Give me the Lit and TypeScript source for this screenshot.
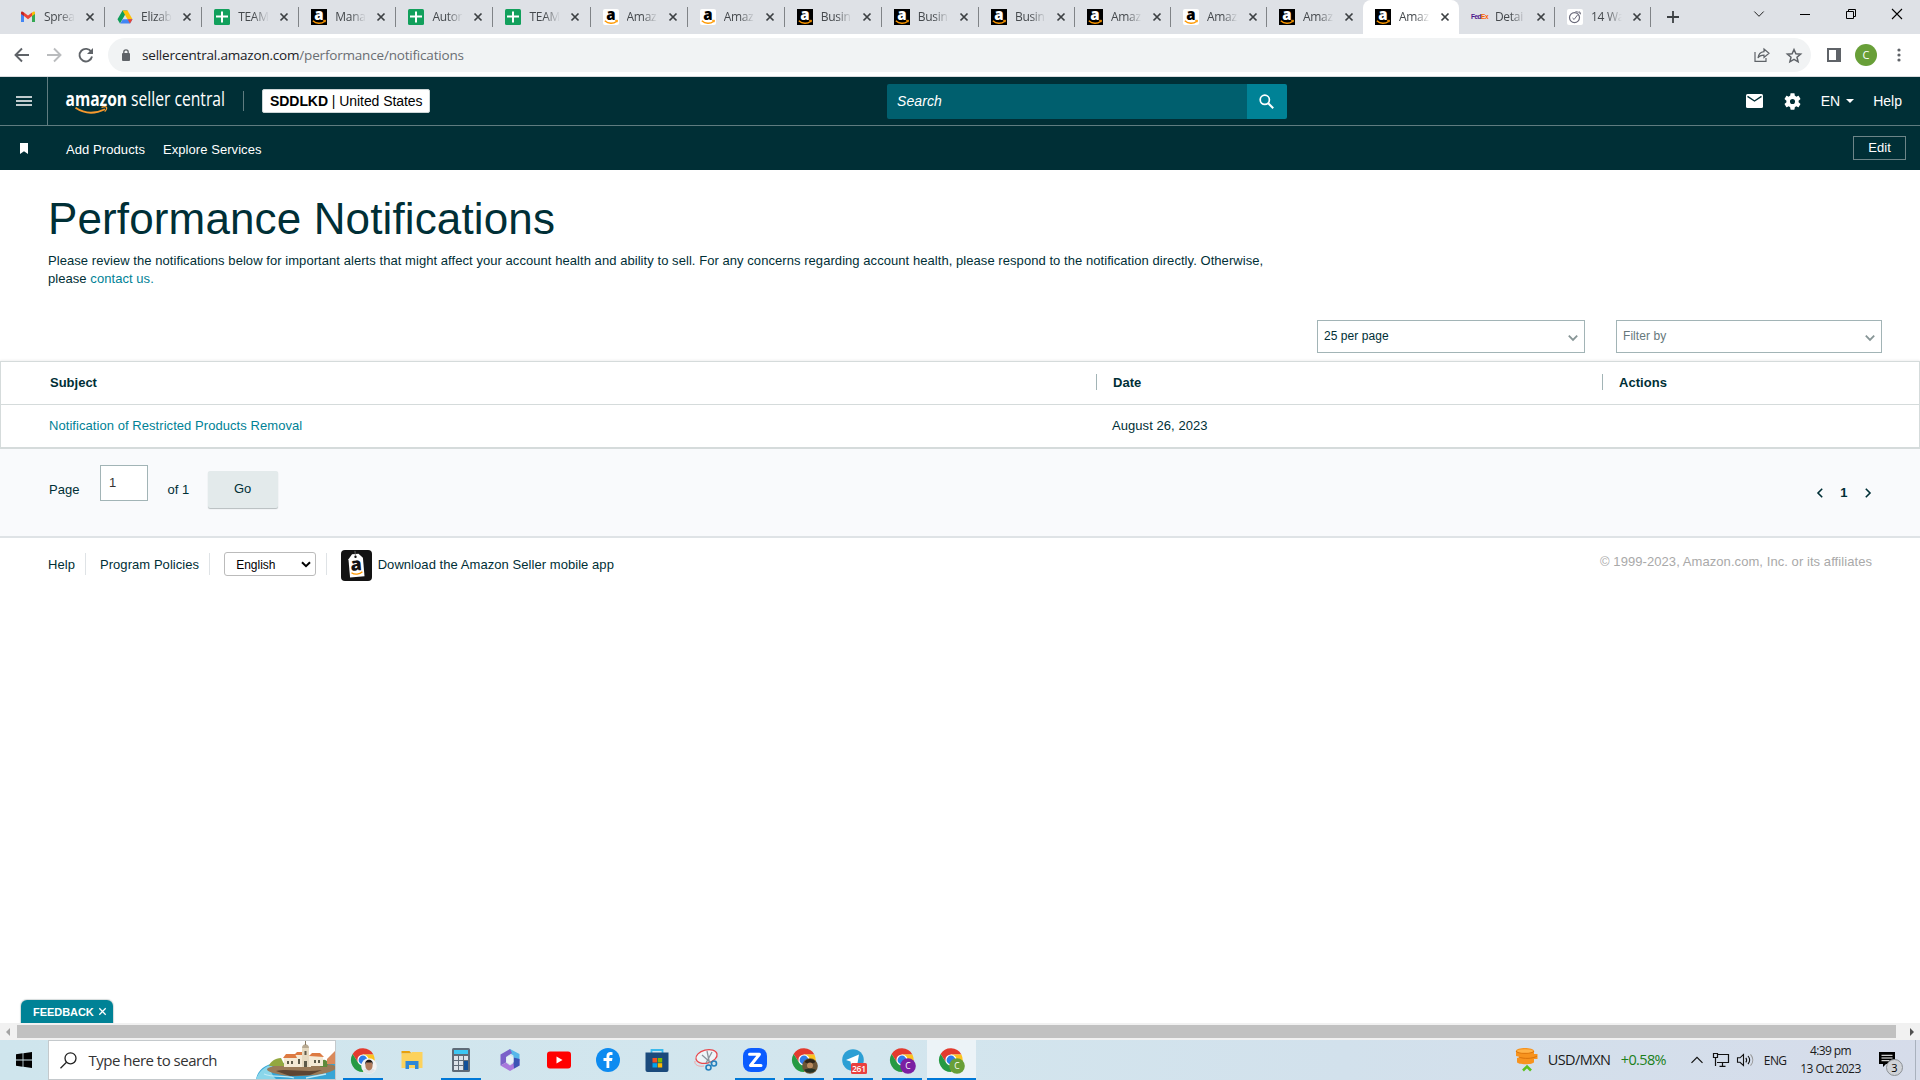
import { LitElement, html, svg, css } from "lit";
import { customElement } from "lit/decorators.js";
import { classMap } from "lit/directives/class-map.js";

type Fav = "gmail" | "drive" | "sheet" | "amzDark" | "amzLight" | "fedex" | "clock";
interface Tab { icon: Fav; title: string; active?: boolean; }

const TABS: Tab[] = [
  { icon: "gmail", title: "Sprea" },
  { icon: "drive", title: "Elizab" },
  { icon: "sheet", title: "TEAM" },
  { icon: "amzDark", title: "Mana" },
  { icon: "sheet", title: "Autor" },
  { icon: "sheet", title: "TEAM" },
  { icon: "amzLight", title: "Amaz" },
  { icon: "amzLight", title: "Amaz" },
  { icon: "amzDark", title: "Busin" },
  { icon: "amzDark", title: "Busin" },
  { icon: "amzDark", title: "Busin" },
  { icon: "amzDark", title: "Amaz" },
  { icon: "amzLight", title: "Amaz" },
  { icon: "amzDark", title: "Amaz" },
  { icon: "amzDark", title: "Amaz", active: true },
  { icon: "fedex", title: "Detai" },
  { icon: "clock", title: "14 Wa" },
];

const favicon = (k: Fav) => {
  switch (k) {
    case "gmail":
      return svg`<path d="M1 4v9h3V6z" fill="#4285f4"/><path d="M15 4v9h-3V6z" fill="#34a853"/><path d="M12 7V3.6l1.3-.8c.9-.5 1.7 0 1.7 1.1V5z" fill="#fbbc04"/><path d="M4 7V3.4l4 3 4-3V7l-4 3.2z" fill="#ea4335"/><path d="M1 5V3.9c0-1.100.8-1.600 1.700-1.100L4 3.600V7z" fill="#c5221f"/>`;
    case "drive":
      return svg`<path d="M5.500 1.500h5l-7.500 13L.500 10.300z" fill="#0f9d58"/><path d="M5.500 1.500h5l5 8.800h-5z" fill="#ffc107"/><path d="M3.200 14.500 5.800 10.200h9.700L13 14.500z" fill="#4285f4"/><path d="M10.600 10.200h4.900L13 14.500z" fill="#ea4335"/>`;
    case "sheet":
      return svg`<rect width="16" height="16" rx="1.500" fill="#12a05c"/><path d="M7 2.500h2v4h5v2H9v5H7v-5H2v-2h5z" fill="#fff"/>`;
    case "amzDark":
    case "amzLight": {
      const dark = k === "amzDark";
      return svg`<rect width="16" height="16" rx=${dark ? 0 : 2} fill=${dark ? "#000" : "#fff"}/><text x="8" y="10.600" text-anchor="middle" font-family="Open Sans, sans-serif" font-weight="800" font-size="15" fill=${dark ? "#fff" : "#000"}>a</text><path d="M1.800 11.800c3.500 3.200 8.500 3.200 12 .4" fill="none" stroke="#f90" stroke-width="1.400"/><path d="M12.200 11.400l2.300-.1-.5 2" fill="none" stroke="#f90" stroke-width="1"/>`;
    }
    case "fedex":
      return svg`<text x="0" y="10.300" font-family="Liberation Sans, sans-serif" font-weight="700" font-size="6.500" letter-spacing="-.5" fill="#4d148c">Fed<tspan fill="#ff6200">Ex</tspan></text>`;
    case "clock":
      return svg`<rect width="16" height="16" rx="2" fill="#fff"/><circle cx="7.500" cy="8.600" r="5" fill="none" stroke="#6b6b7b" stroke-width="1.200"/><path d="M5.500 9l1.600 1.500L10.500 6M8.500 2.600l3 .6 2.500 2M12.500 2.500l1 2" fill="none" stroke="#6b6b7b" stroke-width="1"/>`;
  }
};

const chromeMark = svg`<path d="M1.600 6A12 12 0 0 1 22.400 6.500H12L7.200 14.750z" fill="#e33b2e"/><path d="M1.600 6A12 12 0 0 0 12 24L16.800 14.750H7.200z" fill="#269a43"/><path d="M22.400 6.500A12 12 0 0 1 12 24l4.800-9.200L12 6.500z" fill="#fcc31e"/><circle cx="12" cy="12" r="5.600" fill="#fff"/><circle cx="12" cy="12" r="4.400" fill="#2f7de9"/>`;

interface App { name: string; open?: boolean; active?: boolean; art: unknown; }
const badge = (fill: string) => svg`<circle cx="18" cy="18" r="7.800" fill=${fill}/><text x="18" y="21.200" text-anchor="middle" font-family="Open Sans, sans-serif" font-size="8.500" fill="#fff">C</text>`;

const APPS: App[] = [
  { name: "chrome-a", open: true, art: svg`${chromeMark}<circle cx="18" cy="18" r="7.800" fill="#f3f3f3"/><path d="M12 22.500c2-3 10-3 12 0a7.800 7.800 0 0 1-12 0z" fill="#dfe3e6"/><ellipse cx="18" cy="17.500" rx="3.600" ry="5" fill="#b07a5a"/><path d="M14 17c-.5-7 8.500-7 8 0l-1-2.500h-6z" fill="#1d1a1a"/>` },
  { name: "files", art: svg`<path d="M1.500 3h8l2 2.500h-10z" fill="#e8a10c"/><path d="M1.500 5.500h9l1.500-1.500h10.500v16h-21z" fill="#fdd25c"/><path d="M5.500 13h13v8h-3.500v-4H9v4H5.500z" fill="#2f87d8"/>` },
  { name: "calc", open: true, art: svg`<rect x="3" y="0" width="18" height="24" rx="1.500" fill="#5f6b78"/><rect x="5" y="2" width="14" height="4" fill="#3cc7f4"/><path d="M5 8h4v4H5zm5 0h4v4h-4zm5 0h4v4h-4zM5 13h4v4H5zm5 0h4v4h-4zM5 18h4v4H5zm5 0h4v4h-4z" fill="#dce3ea"/><path d="M15 13h4v9h-4z" fill="#11509a"/>` },
  { name: "office", art: svg`<path d="M12 1 21.500 6v7l-6-3.500V7.500L10 4z" fill="#56b7ea"/><path d="M12 1 2.500 6.500v11l5.500-3V9l6-4z" fill="#7b61c9"/><path d="M2.500 17.500 12 23l9.500-5.500v-6.500L12 17.500 8 14.500z" fill="#a978dc"/><path d="M21.500 11v6.500L16 20.500l-.5-6.500V9.500z" fill="#3b55b5"/><path d="M8.500 9.500 12 7.500l3.500 2v4.500L12 16l-3.500-2z" fill="#e8f1f6"/>` },
  { name: "youtube", art: svg`<rect x="0" y="3.500" width="24" height="17" rx="3" fill="#f00"/><path d="M9.500 8.500v7l6-3.500z" fill="#fff"/>` },
  { name: "facebook", art: svg`<circle cx="12" cy="12" r="12" fill="#0d8bf0"/><path d="M10.500 20v-7H7.500v-3h3V8c0-2.800 1.700-4 4-4l2 .2V7h-1.500c-1.300 0-1.700.6-1.700 1.500V10h3.200l-.5 3h-2.700v7z" fill="#fff"/>` },
  { name: "store", art: svg`<path d="M6.500 5V2h11v3" fill="none" stroke="#39b9ec" stroke-width="1.800"/><path d="M.5 4.500h23V22a2 2 0 0 1-2 2h-19a2 2 0 0 1-2-2z" fill="#1b4a7c"/><path d="M7.500 10H12v4.500H7.500z" fill="#f25022"/><path d="M12.700 10h4.500v4.500h-4.500z" fill="#7fba00"/><path d="M7.500 15.200H12v4.300H7.500z" fill="#00a4ef"/><path d="M12.700 15.200h4.500v4.300h-4.500z" fill="#ffb900"/>` },
  { name: "snip", art: svg`<ellipse cx="12.500" cy="8.500" rx="10.800" ry="6.500" transform="rotate(-14 12.500 8.500)" fill="#fff" fill-opacity=".6" stroke="#e8474c" stroke-width="1.300"/><path d="M1 13c-1 4 4 6 9 5" fill="none" stroke="#f2a3a5"/><path d="M13 3l2.500 12M8 7l9 8M18 4l-6 11" stroke="#8b949c" stroke-width="1.300"/><circle cx="14.500" cy="19.500" r="2.500" fill="none" stroke="#2580bd" stroke-width="1.600"/><circle cx="20" cy="15.500" r="2.500" fill="none" stroke="#2580bd" stroke-width="1.600"/>` },
  { name: "zoom", open: true, art: svg`<rect width="24" height="24" rx="8" fill="#0b5cff"/><path d="M6.500 6.300h10L7.500 17.500H18" fill="none" stroke="#fff" stroke-width="3" stroke-linejoin="round" stroke-linecap="round"/>` },
  { name: "chrome-b", open: true, art: svg`${chromeMark}<circle cx="18" cy="18" r="7.800" fill="#6b5536"/><path d="M12.500 14c2-4 9-4 11 0l-3 1.500h-5z" fill="#2b2316"/><circle cx="18" cy="17.500" r="3" fill="#b98a5d"/><path d="M12 22c3-2 9-2 12 0a7.800 7.800 0 0 1-12 0z" fill="#243226"/>` },
  { name: "telegram", open: true, art: svg`<circle cx="12" cy="12" r="10.800" fill="#2c9fd4"/><path d="M5 12 18 6.500 16 18l-4-3-2 2-.5-3.500z" fill="#fff"/><rect x="10" y="15" width="16" height="11" rx="1.500" fill="#e9403f"/><text x="18" y="23.600" text-anchor="middle" font-family="Open Sans, sans-serif" font-size="8.500" font-weight="600" textLength="14" fill="#fff">261</text>` },
  { name: "chrome-c", open: true, art: svg`${chromeMark}${badge("#7b1fa2")}` },
  { name: "chrome-d", open: true, active: true, art: svg`${chromeMark}${badge("#689f38")}` },
];

@customElement("app-root")
export class AppRoot extends LitElement {
  static styles = css`
    :host { display: block; width: 1920px; height: 1080px; overflow: hidden; background: #fff;
      font-family: "Liberation Sans", Arial, sans-serif; color: #002f36; font-size: 13px; letter-spacing: .058px; }
    * { box-sizing: border-box; }
    svg { display: block; flex: none; overflow: visible; letter-spacing: 0; }
    .screen { display: flex; flex-direction: column; height: 1080px; }
    .row { display: flex; align-items: center; }
    .grow { flex: 1; }
    .t { white-space: nowrap; flex: none; }
    .seg { font-family: "Open Sans", "Noto Sans", sans-serif; }

    .tabs { height: 34px; background: #dee1e6; padding-left: 8px; flex: none; }
    .tab { width: 97.100px; height: 34px; padding-left: 12px; flex: none; color: #45494d; }
    .tab.narrow { width: 96px; }
    .tab.active { background: #fff; border-radius: 8px 8px 0 0; }
    .title { width: 31px; height: 18px; margin-left: 8px; overflow: hidden; white-space: nowrap; font-size: 12px; line-height: 17px; letter-spacing: -.3px;
      -webkit-mask-image: linear-gradient(90deg, #000 50%, transparent 100%); mask-image: linear-gradient(90deg, #000 50%, transparent 100%); }
    .close { margin-left: 11px; }
    .sep { width: 1px; height: 20px; background: #808387; margin-left: auto; }
    .sep.off { visibility: hidden; }
    .plus { margin-left: 16px; }
    .wins { gap: 36px; margin-right: 18px; margin-top: -6px; }

    .toolbar { height: 43px; flex: none; border-bottom: 1px solid #d9dbde; padding-left: 14px; }
    .omni { width: 1703px; height: 34px; margin-left: 14px; background: #f1f3f4; border-radius: 17px; padding: 0 9px 0 14px; }
    .url { margin-left: 12px; font-size: 13.500px; color: #202124; letter-spacing: -.190px; }
    .url .path { color: #6a6e73; }
    .omni .star { margin-left: 16px; }
    .panel { margin-left: 16px; }
    .avatar { width: 22px; height: 22px; border-radius: 50%; background: #689f38; color: #fff; font-size: 11px; text-align: center; line-height: 21px; margin-left: 14px; }
    .dots { margin-left: 20px; }

    .head { height: 49px; flex: none; background: #002f36; border-bottom: 1px solid #5f7c80; color: #fff; letter-spacing: 0; }
    .burger { width: 48px; height: 48px; border-right: 1px solid #5f7c80; padding-left: 16px; }
    .logo { margin-left: 18px; }
    .bar { width: 1px; height: 20px; background: #5f7c80; margin-left: 17px; }
    .badge { width: 168px; height: 24px; margin-left: 18px; background: #fff; border-radius: 2px; color: #000; padding-left: 7px; font-size: 14px; border: 1px solid #ccd5d6; letter-spacing: -.060px; }
    .search { margin-left: 457px; width: 400px; height: 35px; border-radius: 2px; overflow: hidden; }
    .field { width: 360px; height: 35px; background: #005f6e; padding-left: 10px; font-style: italic; font-size: 14px; letter-spacing: .1px; }
    .go-search { width: 40px; height: 35px; background: #008296; justify-content: center; padding-right: 1px; }
    .gear { margin-left: 20.500px; }
    .lang { margin-left: 20px; font-size: 14px; }
    .caret { width: 0; height: 0; border: 4px solid transparent; border-top-color: #fff; border-bottom: 0; margin-left: 6px; }
    .help { margin-left: 19px; margin-right: 18px; font-size: 14px; }

    .sub { height: 44px; flex: none; background: #002f36; color: #fff; padding: 0 14px 0 20px; }
    .add { margin: 2px 0 0 38px; letter-spacing: .080px; }
    .explore { margin: 2px 0 0 18px; }
    .edit { width: 53px; height: 24px; border: 1px solid #6d8588; justify-content: center; margin-top: -1px; }

    .intro { height: 150px; flex: none; padding: 21px 48px 0; }
    h1 { margin: 0; font-weight: 400; font-size: 44px; line-height: 56px; white-space: nowrap; letter-spacing: .130px; }
    .lead { margin-top: 5px; line-height: 18px; }
    .link { color: #008296; }
    .filters { height: 41px; flex: none; padding-left: 1317px; align-items: flex-start; }
    .select { width: 268px; height: 33px; border: 1px solid #a2b4b6; padding: 0 6px 2px 6px; font-size: 12px; }
    .select.second { width: 266px; margin-left: 31px; color: #66787b; }
    .select .chev { margin-top: 4px; }

    .table { height: 88px; flex: none; border: 1px solid #d5dbdb; border-bottom: 2px solid #d5dbdb; box-shadow: 0 -1px 2px #00000010; }
    .tr { display: grid; grid-template-columns: 1095px 506px 1fr; align-items: center; height: 42px; padding-bottom: 2px; }
    .tr + .tr { border-top: 1px solid #d5dbdb; height: 43px; padding-bottom: 2px; }
    .th { font-weight: 700; height: 16px; padding-left: 16px; border-left: 1px solid #a2b4b6; line-height: 18px; white-space: nowrap; }
    .th.first { border: 0; padding-left: 49px; letter-spacing: 0; }
    .td { padding-left: 16px; white-space: nowrap; }
    .td.first { padding-left: 48px; }

    .pager { height: 89px; flex: none; background: #f9fafc; border-bottom: 2px solid #dfe3e6; padding: 0 48px 0 49px; align-items: flex-start; line-height: 16px; }
    .pager .lbl { margin-top: 33px; }
    .num { width: 48px; height: 36px; margin: 16px 0 0 20.400px; border: 1px solid #a2b4b6; background: #fff; padding: 9px 0 0 8px; color: #333; }
    .of { margin-left: 19.500px; letter-spacing: 0; }
    .go { width: 70px; height: 37px; margin: 22px 0 0 18.500px; background: #e3eaeb; border-radius: 2px; box-shadow: 0 1px 1px #b5bcbe; justify-content: center; padding-bottom: 2px; }
    .pg { margin-top: 36px; gap: 16.400px; }
    .pg b { line-height: 16px; }

    .foot { height: 52px; flex: none; padding: 2px 48px 0; }
    .foot .t { margin-top: -2px; }
    .fsep { width: 1px; height: 22px; background: #dfe3e6; margin: -2px 0 0 10px; }
    .fsep.wide { margin-right: 14px; }
    .eng { width: 92px; height: 24px; border: 1px solid #bbb; border-radius: 3px; margin: -2px 0 0 14px; padding: 0 4px 0 11px; color: #000; font-size: 12px; letter-spacing: 0; }
    .foot .eng .t { margin-top: 1px; }
    .app { margin: 1px 0 0 13.500px; }
    .foot .dl { margin-left: 6px; }
    .foot .copy { color: #a9a9a9; margin-top: -8px; letter-spacing: .068px; }

    .space { flex: 1; display: flex; align-items: flex-end; padding-left: 21px; }
    .feedback { width: 92px; height: 23px; background: #008296; color: #fff; border-radius: 6px 6px 0 0; font-size: 11px; font-weight: 700; padding-left: 12px; box-shadow: 0 0 1px 1px #d5dbdb; letter-spacing: -.050px; }
    .feedback svg { margin-left: 5.500px; }
    .scroll { height: 17px; flex: none; background: #f1f1f1; padding: 0 5px 0 5px; justify-content: space-between; }
    .thumb { width: 1879px; height: 13px; background: #c1c1c1; margin: 0 auto 0 6px; }

    .taskbar { height: 40px; flex: none; background: linear-gradient(90deg, #cfe5ed, #d3e6ee 45%, #d2e1ec 70%, #d6dcea); color: #1a1a1a; }
    .start { width: 48px; padding-left: 16px; }
    .find { width: 288px; height: 40px; background: #fff; border: 1px solid #c4c9cc; padding-left: 11px; overflow: hidden; }
    .find .t { margin-left: 11.500px; font-size: 15px; color: #333; letter-spacing: -.5px; }
    .town { margin-left: auto; }
    .apps { padding-left: 2.500px; }
    .appcell { width: 49px; height: 40px; display: flex; flex-direction: column; align-items: center; justify-content: space-between; padding-top: 8px; flex: none; }
    .appcell.active { background: #ecf3f7; }
    .appcell .line { width: 40px; height: 2px; }
    .appcell.open .line { background: #0078d7; }
    .appcell.active .line { width: 49px; }
    .fx { margin: -1px 0 0 10px; font-size: 14.500px; letter-spacing: -.6px; }
    .pct { margin: -1px 0 0 10.500px; font-size: 14.500px; color: #1a7f1a; letter-spacing: -.650px; }
    .up { margin-left: 25.500px; }
    .net { margin-left: 10px; }
    .vol { margin-left: 8px; }
    .kb { margin-left: 9.500px; font-size: 12px; letter-spacing: -.6px; }
    .clock { width: 70px; margin-left: 9px; text-align: center; font-size: 12px; line-height: 18px; letter-spacing: -.580px; }
    .note { margin: 0 18px 0 13.500px; }
    .peek { width: 1px; height: 40px; background: #a9b1bd; margin-right: 4px; }
  `;

  private tab(t: Tab, i: number) {
    const off = t.active || TABS[i + 1]?.active;
    return html`<div class=${classMap({ row: true, tab: true, narrow: i > 9, active: !!t.active })}>
      <svg width="16" height="16" viewBox="0 0 16 16">${favicon(t.icon)}</svg>
      <span class="title seg">${t.title}</span>
      <svg class="close" width="8" height="8" viewBox="0 0 8 8"><path d="M.5.5l7 7m0-7l-7 7" stroke="#3c4043" stroke-width="1.700"/></svg>
      <i class=${classMap({ sep: true, off: !!off })}></i>
    </div>`;
  }

  private chevron() {
    return html`<svg class="chev" width="10" height="6" viewBox="0 0 10 6"><path d="M.8.6 5 4.900 9.200.6" fill="none" stroke="#879596" stroke-width="1.800"/></svg>`;
  }

  render() {
    return html`<div class="screen">
      <div class="row tabs">
        ${TABS.map((t, i) => this.tab(t, i))}
        <svg class="plus" width="12" height="12" viewBox="0 0 12 12"><path d="M6 0v12M0 6h12" stroke="#3c4043" stroke-width="1.800"/></svg>
        <span class="grow"></span>
        <div class="row wins">
          <svg width="10" height="6" viewBox="0 0 10 6"><path d="M.3.5 5 5.300 9.700.5" fill="none" stroke="#222"/></svg>
          <svg width="10" height="2" viewBox="0 0 10 2"><path d="M0 1.500h10" stroke="#000"/></svg>
          <svg width="10" height="10" viewBox="0 0 10 10"><path d="M.5 2.500h7v7h-7zM2.500 2.500v-2h7v7h-2" fill="none" stroke="#000"/></svg>
          <svg width="10" height="10" viewBox="0 0 10 10"><path d="M0 0l10 10M10 0L0 10" stroke="#000" stroke-width="1.100"/></svg>
        </div>
      </div>

      <div class="row toolbar">
        <svg width="80" height="16" viewBox="0 0 80 16" fill="none" stroke-width="1.900"><path d="M15 8H2M8 1.500 1.500 8 8 14.500" stroke="#5f6368"/><path d="M33 8h13M40 1.500 46.500 8 40 14.500" stroke="#babcbe"/><path d="M77.300 5A6.300 6.300 0 1 0 78 9.500" stroke="#5f6368"/><path d="M79 1v6h-6z" fill="#5f6368"/></svg>
        <div class="row omni">
          <svg width="8" height="12" viewBox="0 0 8 12"><rect y="4" width="8" height="8" rx="1" fill="#5f6368"/><path d="M1.800 5V3a2.200 2.200 0 0 1 4.400 0v2" fill="none" stroke="#5f6368" stroke-width="1.300"/></svg>
          <span class="t url seg">sellercentral.amazon.com<span class="path">/performance/notifications</span></span>
          <span class="grow"></span>
          <svg width="16" height="14" viewBox="0 0 16 14" fill="none" stroke="#5f6368" stroke-width="1.200"><path d="M1 4v9.300h11V10"/><path d="M10 1l5 4.300-5 4.200V7.200c-3 0-4.800.8-6 2.800.4-3.500 2.500-6 6-6.400z"/></svg>
          <svg class="star" width="16" height="15" viewBox="0 0 16 15"><path d="M8 1.500l1.900 4.300 4.700.4-3.600 3 1.100 4.600L8 11.400l-4.100 2.400L5 9.200l-3.600-3 4.700-.4z" fill="none" stroke="#5f6368" stroke-width="1.500"/></svg>
        </div>
        <svg class="panel" width="14" height="14" viewBox="0 0 14 14"><path d="M1 1h12v12H1z" fill="none" stroke="#5f6368" stroke-width="2"/><path d="M9 1h4v12H9z" fill="#5f6368"/></svg>
        <div class="avatar seg">C</div>
        <svg class="dots" width="4" height="14" viewBox="0 0 4 14" fill="#5f6368"><circle cx="2" cy="2" r="1.600"/><circle cx="2" cy="7" r="1.600"/><circle cx="2" cy="12" r="1.600"/></svg>
      </div>

      <div class="row head">
        <div class="row burger"><svg width="16" height="10" viewBox="0 0 16 10"><path d="M0 1h16M0 5h16M0 9h16" stroke="#fff" stroke-width="1.700"/></svg></div>
        <svg class="logo" width="160" height="26" viewBox="0 0 160 26">
          <g font-family="Open Sans, Noto Sans, sans-serif" font-size="19.500" fill="#fff"><text x="-.5" y="18" font-weight="700" textLength="61.500" lengthAdjust="spacingAndGlyphs">amazon</text><text x="65" y="18" textLength="94" lengthAdjust="spacingAndGlyphs">seller central</text></g>
          <path d="M9.500 19.800c9 6 20 6 29.500 1.400" fill="none" stroke="#f79a2e" stroke-width="1.800"/><path d="M35.500 19.400c2-.8 4.500-.8 5 0s-.6 3-1.800 4.200" fill="none" stroke="#f79a2e" stroke-width="1.200"/>
        </svg>
        <i class="bar"></i>
        <div class="row badge"><span class="t"><b>SDDLKD</b> | United States</span></div>
        <div class="row search">
          <div class="row field"><span class="t">Search</span></div>
          <div class="row go-search"><svg width="15" height="15" viewBox="0 0 15 15" fill="none" stroke="#fff"><circle cx="5.800" cy="5.800" r="4.600" stroke-width="1.700"/><path d="M9.200 9.200l5 5" stroke-width="2"/></svg></div>
        </div>
        <span class="grow"></span>
        <svg width="17" height="14" viewBox="0 0 17 14"><rect width="17" height="14" rx="1.500" fill="#fff"/><path d="M1.500 2.300 8.500 7l7-4.700" fill="none" stroke="#002f36" stroke-width="1.400"/></svg>
        <svg class="gear" width="17" height="17" viewBox="2 2 20 20"><path fill="#fff" d="M19.140 12.940c.04-.3.06-.61.06-.94 0-.32-.02-.64-.07-.94l2.030-1.580c.18-.14.23-.41.120-.61l-1.920-3.320c-.12-.22-.37-.29-.59-.22l-2.390.96c-.5-.38-1.030-.7-1.620-.94L14.400 2.810c-.04-.24-.24-.41-.48-.41h-3.840c-.24 0-.43.17-.47.41L9.250 5.350c-.59.240-1.130.57-1.620.94L5.240 5.330c-.22-.08-.47 0-.59.22L2.740 8.870c-.12.210-.08.470.120.610l2.030 1.580c-.05.3-.09.630-.09.940s.02.640.07.940l-2.030 1.580c-.18.140-.23.410-.12.610l1.920 3.320c.12.220.37.290.59.220l2.390-.96c.5.380 1.030.7 1.620.94l.36 2.540c.05.240.24.410.48.410h3.840c.24 0 .44-.17.47-.41l.36-2.540c.59-.24 1.130-.56 1.620-.94l2.390.96c.22.080.47 0 .59-.22l1.920-3.320c.12-.22.070-.47-.12-.61zM12 15a3 3 0 1 1 0-6 3 3 0 0 1 0 6z"/></svg>
        <span class="t lang">EN</span><i class="caret"></i>
        <span class="t help">Help</span>
      </div>

      <div class="row sub">
        <svg width="8" height="11" viewBox="0 0 8 11"><path d="M0 0h8v11L4 8.300 0 11z" fill="#fff"/></svg>
        <span class="t add">Add Products</span>
        <span class="t explore">Explore Services</span>
        <span class="grow"></span>
        <div class="row edit"><span class="t">Edit</span></div>
      </div>

      <div class="intro">
        <h1>Performance Notifications</h1>
        <div class="lead"><span class="t">Please review the notifications below for important alerts that might affect your account health and ability to sell. For any concerns regarding account health, please respond to the notification directly. Otherwise,</span><br><span class="t">please <span class="link">contact us.</span></span></div>
      </div>

      <div class="row filters">
        <div class="row select"><span class="t">25 per page</span><span class="grow"></span>${this.chevron()}</div>
        <div class="row select second"><span class="t">Filter by</span><span class="grow"></span>${this.chevron()}</div>
      </div>

      <div class="table">
        <div class="tr"><div class="th first">Subject</div><div class="th">Date</div><div class="th">Actions</div></div>
        <div class="tr"><div class="td first link">Notification of Restricted Products Removal</div><div class="td">August 26, 2023</div><div class="td"></div></div>
      </div>

      <div class="row pager">
        <span class="t lbl">Page</span>
        <div class="num">1</div>
        <span class="t lbl of">of 1</span>
        <div class="row go"><span class="t">Go</span></div>
        <span class="grow"></span>
        <div class="row pg">
          <svg width="8" height="10" viewBox="0 0 8 10"><path d="M6.200.8 2 5l4.200 4.200" fill="none" stroke="#002f36" stroke-width="1.600"/></svg>
          <b>1</b>
          <svg width="8" height="10" viewBox="0 0 8 10"><path d="M1.800.8 6 5 1.800 9.200" fill="none" stroke="#002f36" stroke-width="1.600"/></svg>
        </div>
      </div>

      <div class="row foot">
        <span class="t">Help</span><i class="fsep wide"></i>
        <span class="t">Program Policies</span><i class="fsep"></i>
        <div class="row eng"><span class="t">English</span><span class="grow"></span><svg width="10" height="7" viewBox="0 0 10 7"><path d="M1 1.200l4 4 4-4" fill="none" stroke="#000" stroke-width="2"/></svg></div>
        <i class="fsep"></i>
        <svg class="app" width="31" height="31" viewBox="0 0 31 31"><rect width="31" height="31" rx="4" fill="#131313"/><g transform="rotate(-5 15 15)"><path d="M8 8.500 12 4h6.500l4 4.500V27H8z" fill="#fff"/><circle cx="15.200" cy="6.800" r="1.200" fill="#131313"/><path d="M15.200 6V.8" stroke="#777" stroke-width=".8"/><text x="15.200" y="20.500" text-anchor="middle" font-family="Open Sans, sans-serif" font-weight="800" font-size="18" fill="#131313">a</text><path d="M9.800 22.300c3 2.500 8 2.500 11 0" fill="none" stroke="#f90" stroke-width="1.300"/></g></svg>
        <span class="t dl">Download the Amazon Seller mobile app</span>
        <span class="grow"></span>
        <span class="t copy">© 1999-2023, Amazon.com, Inc. or its affiliates</span>
      </div>

      <div class="space">
        <div class="row feedback"><span class="t">FEEDBACK</span><svg width="7" height="7" viewBox="0 0 7 7"><path d="M.3.3l6.400 6.400m0-6.400L.3 6.700" stroke="#fff" stroke-width="1.300"/></svg></div>
      </div>

      <div class="row scroll">
        <svg width="6" height="8" viewBox="0 0 6 8"><path d="M5 0v8L1 4z" fill="#a3a3a3"/></svg>
        <i class="thumb"></i>
        <svg width="6" height="8" viewBox="0 0 6 8"><path d="M1 0v8l4-4z" fill="#505050"/></svg>
      </div>

      <div class="row taskbar">
        <div class="start"><svg width="16" height="16" viewBox="0 0 16 16"><path d="M0 2.300 6.600 1.300V7.600H0zM7.400 1.200 16 0v7.600H7.400zM0 8.400h6.600v6.300L0 13.700zM7.400 8.400H16V16l-8.600-1.200z" fill="#000"/></svg></div>
        <div class="row find">
          <svg width="17" height="17" viewBox="0 0 17 17" fill="none" stroke="#222" stroke-width="1.300"><circle cx="10.500" cy="6.300" r="5.500"/><path d="M6.500 10.300.5 16.300"/></svg>
          <span class="t seg">Type here to search</span>
          <svg class="town" width="79" height="38" viewBox="0 0 79 38">
            <path d="M0 38C2 29 9 23 20 22l59 1v15z" fill="#35a5d6"/><path d="M0 38c3-8 9-13 18-15-5 5-3 10 2 15z" fill="#8ad6ea"/>
            <path d="M12 27c6-3 20-4 34-4s28-1 33 2-8 8-20 9-24 2-33 0-18-4-14-7z" fill="#9a7a58"/><path d="M20 30c12-3 28 2 46-1l-12 5-20 1z" fill="#5d4431"/>
            <path d="M13 25c1-4 6-8 12-8l4 8z" fill="#93a83f"/><path d="M64 23c1-5 6-6 8-1l-1 4h-7z" fill="#5f8a3a"/>
            <path d="M28 17h12v9H28zM54 15h13v10H54zM39 14h16v12H39z" fill="#f4ead6"/><path d="M46 7h7v19h-7z" fill="#e6d9c0"/><path d="M46 7c0-5 7-5 7 0z" fill="#b9aa92"/><path d="M49.500 0v4" stroke="#8b7d68"/>
            <path d="M27 17l3-4h9l2 4zM53 15l3-3h8l4 4zM38 14l3-3h5v3z" fill="#dd7a42"/><path d="M71 18l8-8v13h-8z" fill="#d98a5c"/>
            <path d="M31 20h2v3h-2zM35 20h2v3h-2zM42 18h2v5h-2zM48.500 10h2v4h-2zM48 20h3v6h-3zM58 19h2v3h-2zM62 19h2v3h-2z" fill="#5d5a4a"/>
            <path d="M8 33c10 4 20 1 30 4M50 37l20-4" stroke="#bfe9f5" stroke-width="1.300" fill="none"/>
          </svg>
        </div>
        <div class="row apps">
          ${APPS.map((a) => html`<div class=${classMap({ appcell: true, open: !!a.open, active: !!a.active })}><svg width="24" height="24" viewBox="0 0 24 24">${a.art}</svg><i class="line"></i></div>`)}
        </div>
        <span class="grow"></span>
        <svg width="22" height="24" viewBox="0 0 22 24"><path d="M0 3c0-4 18-4 18 0v3h3.500v5H18v3c0 3-17 3-17 0v-4L4 9 0 8z" fill="#f7931e"/><path d="M0 3c0 3 18 3 18 0M3 9c4 2 14 2 18-1" fill="none" stroke="#d9730b"/><ellipse cx="9" cy="3" rx="8" ry="1.800" fill="#ffb347"/><path d="M7 22.500l4-4 4 4" fill="none" stroke="#5dc21e" stroke-width="2.600"/></svg>
        <span class="t fx seg">USD/MXN</span>
        <span class="t pct seg">+0.58%</span>
        <svg class="up" width="12" height="8" viewBox="0 0 12 8"><path d="M.5 6.800 6 1.300l5.500 5.500" fill="none" stroke="#111" stroke-width="1.200"/></svg>
        <svg class="net" width="16" height="14" viewBox="0 0 16 14" fill="none" stroke="#111" stroke-width="1.200"><path d="M5 1.500h10.500v8H4M.5.5h4v4h-4zM2.500 4.500V13M9.500 9.500V13M6.500 13.300h6"/></svg>
        <svg class="vol" width="17" height="14" viewBox="0 0 17 14" fill="none" stroke="#111" stroke-width="1.100"><path d="M.5 4.800h2.500L6.500 1.500v11L3 9.300H.5z"/><path d="M8.800 4.800c1 1.300 1 3.200 0 4.500M11 3c2 2.400 2 5.700 0 8.100"/><path d="M13.500 1.300c3 3.400 3 8 0 11.400" stroke="#999"/></svg>
        <span class="t kb seg">ENG</span>
        <div class="clock seg">4:39 pm<br>13 Oct 2023</div>
        <svg class="note" width="18" height="16" viewBox="0 0 18 16"><path d="M0 0h16v12H7l-3 3v-3H0z" fill="#000"/><path d="M2.500 3.300h11M2.500 6h11M2.500 8.700h8" stroke="#fff"/><circle cx="15.500" cy="15.500" r="8" fill="#d0d3d8" stroke="#8b8f94"/><text x="15.500" y="19.500" text-anchor="middle" font-family="Open Sans, sans-serif" font-size="11" fill="#000">3</text></svg>
        <i class="peek"></i>
      </div>
    </div>`;
  }
}
